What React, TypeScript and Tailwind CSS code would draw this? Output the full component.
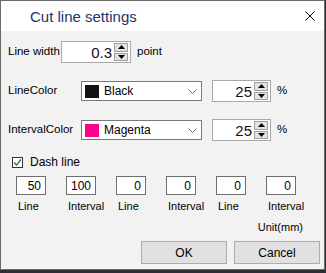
import React from "react";

const F = { fontFamily: '"Liberation Sans", Arial, sans-serif' };

function Spinner() {
  return (
    <div className="flex flex-col w-[14px] my-[1px] mr-[2px] gap-[1px]">
      <div className="flex-1 bg-[#e3e3e3] border border-[#a0a0a0] flex items-center justify-center">
        <svg width="7" height="4" viewBox="0 0 7 4"><path d="M3.5 0 L7 4 L0 4 Z" fill="#000" /></svg>
      </div>
      <div className="flex-1 bg-[#e3e3e3] border border-[#a0a0a0] flex items-center justify-center">
        <svg width="7" height="4" viewBox="0 0 7 4"><path d="M0 0 L7 0 L3.5 4 Z" fill="#000" /></svg>
      </div>
    </div>
  );
}

function SpinBox({ value, w }: { value: string; w: string }) {
  return (
    <div className={`${w} h-[22px] bg-white border border-[#a8a8a8] flex items-stretch`}>
      <div className="flex-1 flex items-center justify-end pr-[2px] text-[15px] leading-none text-[#111]">{value}</div>
      <Spinner />
    </div>
  );
}

function Dropdown({ color, label }: { color: string; label: string }) {
  return (
    <div className="w-[121px] h-[20px] bg-white border border-[#7a7a7a] flex items-center">
      <div className="ml-[3px] w-[14px] h-[13px]" style={{ backgroundColor: color }} />
      <div className="ml-[5px] flex-1 text-[12px] leading-none text-black">{label}</div>
      <svg className="mr-[4px]" width="9" height="5" viewBox="0 0 9 5">
        <path d="M0.5 0.5 L4.5 4.5 L8.5 0.5" fill="none" stroke="#6a6a6a" strokeWidth="1" />
      </svg>
    </div>
  );
}

function SmallBox({ value }: { value: string }) {
  return (
    <div className="w-[30px] h-[19px] bg-white border border-[#6e6e6e] flex items-center justify-end pr-[4px] text-[12px] leading-none text-black">
      {value}
    </div>
  );
}

export default function App() {
  const cols = [
    ["50", "Line"],
    ["100", "Interval"],
    ["0", "Line"],
    ["0", "Interval"],
    ["0", "Line"],
    ["0", "Interval"],
  ];
  return (
    <div className="w-[326px] h-[273px] bg-[#2b2f36]" style={F}>
      <div className="w-[325px] h-[270px] border border-[#6b6b6b] flex flex-col bg-[#f2f2f2]">
        <div className="h-[30px] bg-white flex items-center shrink-0">
          <div className="pl-[29px] text-[15px] leading-none text-[#1b3566] flex-1">Cut line settings</div>
          <svg className="mr-[9px]" width="10" height="10" viewBox="0 0 10 10">
            <path d="M0.5 0.5 L9.5 9.5 M9.5 0.5 L0.5 9.5" stroke="#000" strokeWidth="1" />
          </svg>
        </div>
        <div className="flex-1 flex flex-col pl-[7px] text-[11.5px] text-black">
          <div className="mt-[10px] h-[22px] flex items-center">
            <div className="w-[53px]">Line width</div>
            <SpinBox value="0.3" w="w-[70px]" />
            <div className="ml-[6px]">point</div>
          </div>
          <div className="mt-[17px] h-[22px] flex items-center">
            <div className="w-[73px]">LineColor</div>
            <Dropdown color="#121212" label="Black" />
            <div className="ml-[10px]"><SpinBox value="25" w="w-[59px]" /></div>
            <div className="ml-[6px]">%</div>
          </div>
          <div className="mt-[17px] h-[22px] flex items-center">
            <div className="w-[73px]">IntervalColor</div>
            <Dropdown color="#ff0088" label="Magenta" />
            <div className="ml-[10px]"><SpinBox value="25" w="w-[59px]" /></div>
            <div className="ml-[6px]">%</div>
          </div>
          <div className="mt-[14px] h-[14px] flex items-center">
            <div className="ml-[4px] w-[11px] h-[11px] border border-[#333] bg-white flex items-center justify-center">
              <svg width="9" height="9" viewBox="0 0 9 9">
                <path d="M1 4.5 L3.5 7 L8 1.5" fill="none" stroke="#555" strokeWidth="1.2" />
              </svg>
            </div>
            <div className="ml-[7px] text-[12px]">Dash line</div>
          </div>
          <div className="mt-[7px] ml-[8px] flex">
            {cols.map(([v, l], i) => (
              <div key={i} className="w-[50px] flex flex-col">
                <SmallBox value={v} />
                <div className="mt-[5px] h-[13px] pl-[2px] text-[11px] leading-[13px]">{l}</div>
              </div>
            ))}
          </div>
          <div className="mt-[8px] h-[13px] pr-[21px] flex justify-end text-[11px] leading-[13px]">Unit(mm)</div>
          <div className="mt-[7px] h-[23px] pr-[4px] flex justify-end gap-[7px]">
            <button className="w-[86px] h-[23px] bg-[#e1e1e1] border border-[#adadad] text-[12px] text-black">OK</button>
            <button className="w-[86px] h-[23px] bg-[#e1e1e1] border border-[#adadad] text-[12px] text-black">Cancel</button>
          </div>
        </div>
      </div>
    </div>
  );
}
